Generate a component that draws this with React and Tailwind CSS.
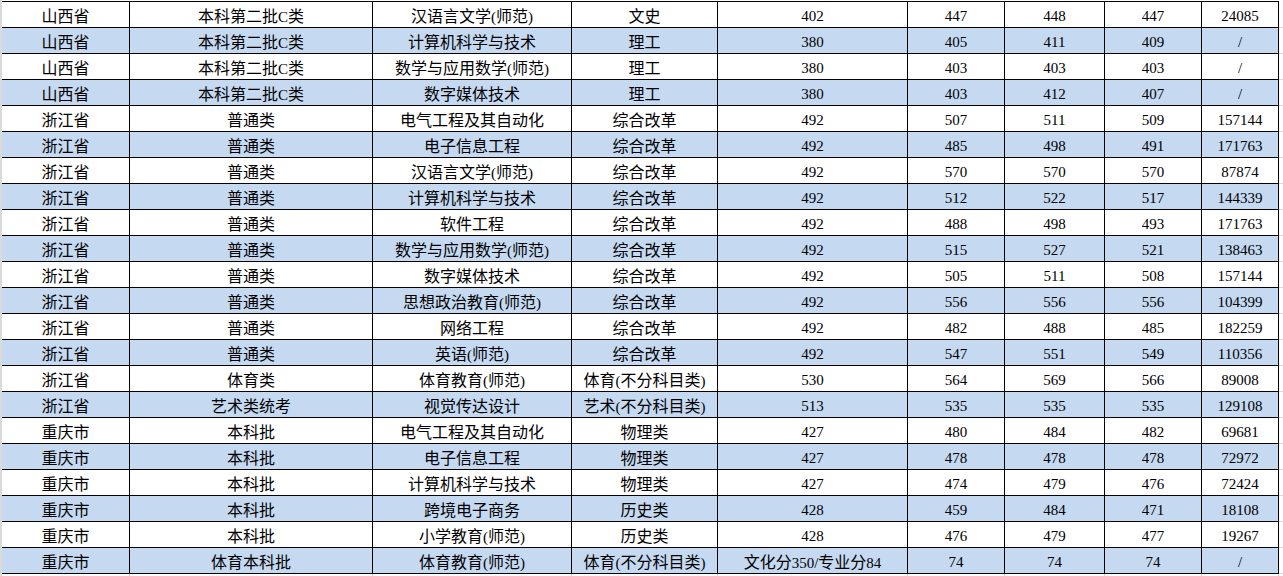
import React from "react";

const rows = [
  ["山西省", "本科第二批C类", "汉语言文学(师范)", "文史", "402", "447", "448", "447", "24085"],
  ["山西省", "本科第二批C类", "计算机科学与技术", "理工", "380", "405", "411", "409", "/"],
  ["山西省", "本科第二批C类", "数学与应用数学(师范)", "理工", "380", "403", "403", "403", "/"],
  ["山西省", "本科第二批C类", "数字媒体技术", "理工", "380", "403", "412", "407", "/"],
  ["浙江省", "普通类", "电气工程及其自动化", "综合改革", "492", "507", "511", "509", "157144"],
  ["浙江省", "普通类", "电子信息工程", "综合改革", "492", "485", "498", "491", "171763"],
  ["浙江省", "普通类", "汉语言文学(师范)", "综合改革", "492", "570", "570", "570", "87874"],
  ["浙江省", "普通类", "计算机科学与技术", "综合改革", "492", "512", "522", "517", "144339"],
  ["浙江省", "普通类", "软件工程", "综合改革", "492", "488", "498", "493", "171763"],
  ["浙江省", "普通类", "数学与应用数学(师范)", "综合改革", "492", "515", "527", "521", "138463"],
  ["浙江省", "普通类", "数字媒体技术", "综合改革", "492", "505", "511", "508", "157144"],
  ["浙江省", "普通类", "思想政治教育(师范)", "综合改革", "492", "556", "556", "556", "104399"],
  ["浙江省", "普通类", "网络工程", "综合改革", "492", "482", "488", "485", "182259"],
  ["浙江省", "普通类", "英语(师范)", "综合改革", "492", "547", "551", "549", "110356"],
  ["浙江省", "体育类", "体育教育(师范)", "体育(不分科目类)", "530", "564", "569", "566", "89008"],
  ["浙江省", "艺术类统考", "视觉传达设计", "艺术(不分科目类)", "513", "535", "535", "535", "129108"],
  ["重庆市", "本科批", "电气工程及其自动化", "物理类", "427", "480", "484", "482", "69681"],
  ["重庆市", "本科批", "电子信息工程", "物理类", "427", "478", "478", "478", "72972"],
  ["重庆市", "本科批", "计算机科学与技术", "物理类", "427", "474", "479", "476", "72424"],
  ["重庆市", "本科批", "跨境电子商务", "历史类", "428", "459", "484", "471", "18108"],
  ["重庆市", "本科批", "小学教育(师范)", "历史类", "428", "476", "479", "477", "19267"],
  ["重庆市", "体育本科批", "体育教育(师范)", "体育(不分科目类)", "文化分350/专业分84", "74", "74", "74", "/"],
];

const gridCols =
  "grid grid-cols-[128px_243px_199px_146px_190px_97px_100px_97px_77px]";

function Cell({ text }) {
  const parts = text.match(/[\u4e00-\u9fff]+|[^\u4e00-\u9fff]+/g) || [];
  return (
    <>
      {parts.map((p, k) =>
        /[\u4e00-\u9fff]/.test(p) ? (
          <span
            key={k}
            className="text-[16px]"
            style={{ fontFamily: '"Noto Sans CJK SC", sans-serif' }}
          >
            {p}
          </span>
        ) : (
          <span key={k} className="text-[15px]">
            {p}
          </span>
        )
      )}
    </>
  );
}

export default function App() {
  return (
    <div
      className="w-[1283px] h-[576px] bg-white flex overflow-hidden text-black"
      style={{ fontFamily: '"Liberation Serif", "Noto Sans CJK SC", serif' }}
    >
      <div className="w-[2px] h-full bg-[#dadada]" />
      <div className="flex flex-col">
        <div className="mt-[1px] border-t border-black">
          {rows.map((r, i) => (
            <div
              key={i}
              className={`${gridCols} h-[26px] ${i % 2 === 1 ? "bg-[#c5d9f1]" : "bg-white"}`}
            >
              {r.map((c, j) => (
                <div
                  key={j}
                  className="border-r border-b border-black text-center text-[16px] leading-[25px] pt-[1px] whitespace-nowrap overflow-hidden"
                >
                  <Cell text={c} />
                </div>
              ))}
            </div>
          ))}
        </div>
        <div className={`${gridCols} h-[3px]`}>
          {rows[0].map((_, j) => (
            <div key={j} className="border-r border-[#d9d9d9]" />
          ))}
        </div>
      </div>
      <div className="flex-1 flex flex-col pt-[2px]">
        {rows.map((_, i) => (
          <div key={i} className="h-[26px] border-b border-[#d9d9d9]" />
        ))}
      </div>
    </div>
  );
}
